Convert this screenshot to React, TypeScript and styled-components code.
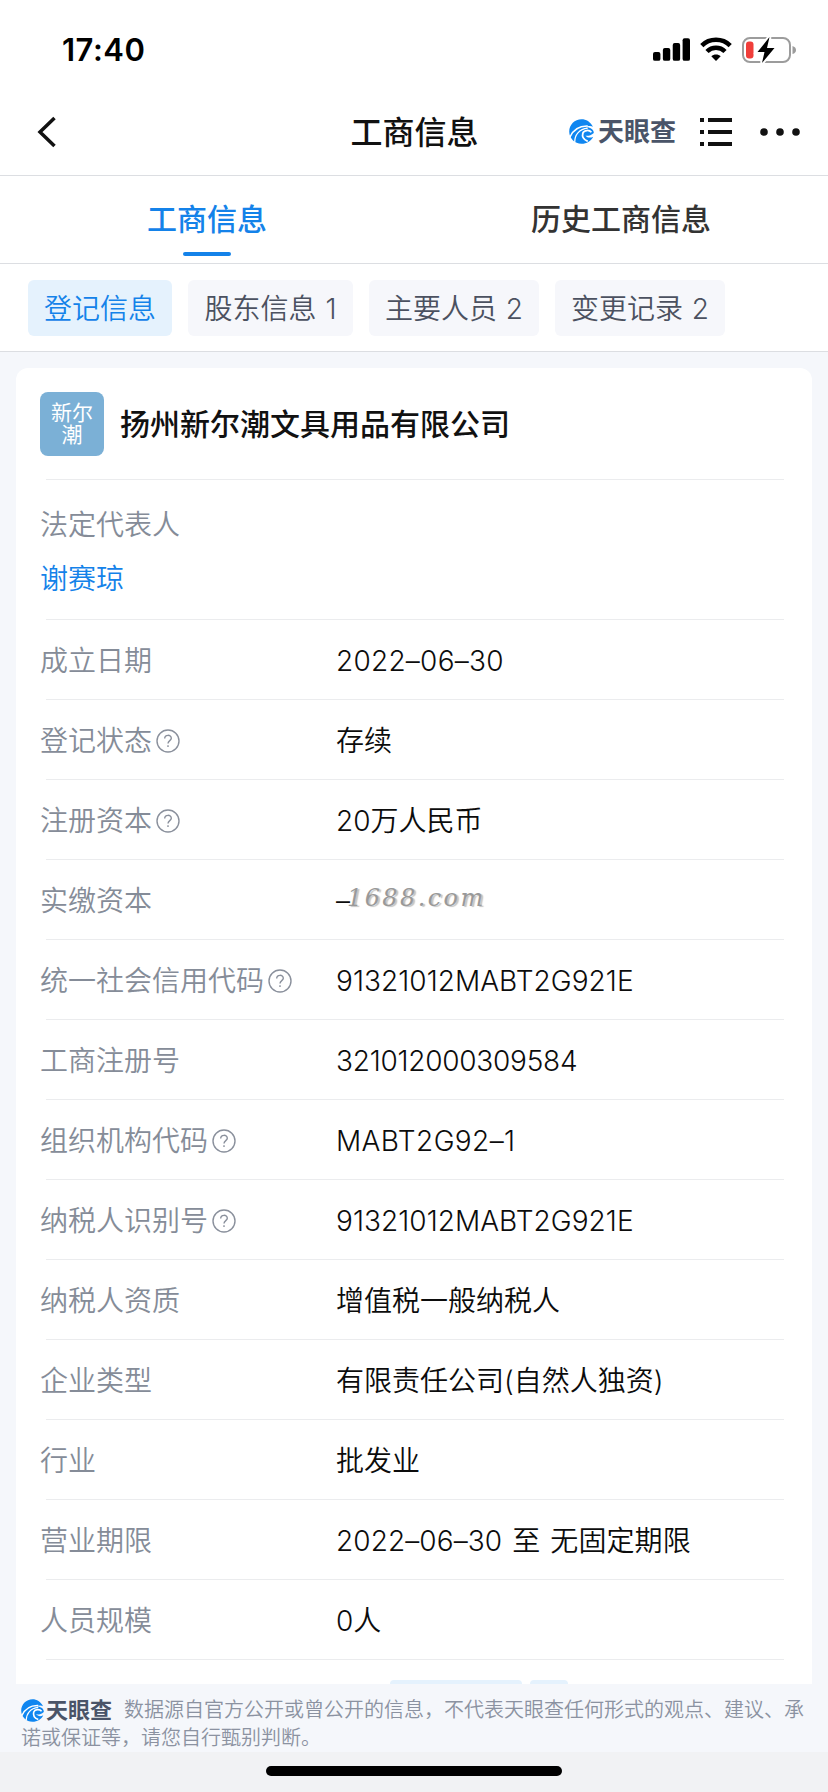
import styled, { createGlobalStyle } from 'styled-components';

const GlobalStyle = createGlobalStyle`
  * {
    box-sizing: border-box;
  }
  body {
    margin: 0;
    background: #fff;
    font-family: Inter, 'Noto Sans CJK SC', sans-serif;
    font-weight: 350;
  }
`;

const Screen = styled.div`
  width: 828px;
  height: 1792px;
  display: flex;
  flex-direction: column;
  overflow: hidden;
  background: #f5f7fb;
`;

const StatusBar = styled.div`
  height: 88px;
  flex: none;
  display: flex;
  align-items: center;
  justify-content: space-between;
  padding: 12px 32px 0 62px;
  background: #fff;
`;

const Clock = styled.span`
  font-size: 31px;
  font-weight: 600;
  line-height: 40px;
  letter-spacing: 0.5px;
  color: #000;
`;

const StatusIcons = styled.div`
  display: flex;
  align-items: center;
  gap: 10px;

  svg {
    display: block;
  }
`;

const NavBar = styled.header`
  height: 88px;
  flex: none;
  display: grid;
  grid-template-columns: 1fr auto 1fr;
  align-items: center;
  padding: 0 28px 0 37px;
  border-bottom: 1px solid #dcdee2;
  background: #fff;

  svg {
    display: block;
  }
`;

const NavTitle = styled.h1`
  margin: 2px 0 0 -8px;
  font-size: 32px;
  font-weight: 500;
  line-height: 44px;
  color: #111;
`;

const NavActions = styled.div`
  display: flex;
  align-items: center;
  justify-content: flex-end;
  gap: 28px;
`;

const BrandBox = styled.span<{ size: number }>`
  display: inline-flex;
  align-items: center;
  gap: 4px;
  margin-right: -4px;
  font-size: ${(props) => props.size}px;
  line-height: 28px;
  font-weight: 600;
  color: #4a5468;
  vertical-align: top;
`;

const Tabs = styled.nav`
  height: 88px;
  flex: none;
  display: grid;
  grid-template-columns: 1fr 1fr;
  border-bottom: 1px solid #dcdee2;
  background: #fff;
`;

const Tab = styled.div<{ $active?: boolean }>`
  display: flex;
  flex-direction: column;
  align-items: center;
  padding-top: 21px;
  font-size: 30px;
  font-weight: 500;
  line-height: 44px;
  color: ${(props) => (props.$active ? '#1482e9' : '#333')};

  &::after {
    content: '';
    width: 48px;
    height: 4px;
    margin-top: 11px;
    border-radius: 2px;
    background: ${(props) => (props.$active ? '#1482e9' : 'transparent')};
  }
`;

const Chips = styled.div`
  height: 88px;
  flex: none;
  display: flex;
  align-items: flex-start;
  gap: 16px;
  padding: 16px 28px 0;
  border-bottom: 1px solid #dcdee2;
  background: #fff;
`;

const Chip = styled.div<{ $active?: boolean; width: number }>`
  width: ${(props) => props.width}px;
  height: 56px;
  border-radius: 6px;
  font-size: 28px;
  line-height: 58px;
  text-align: center;
  white-space: nowrap;
  word-spacing: 1px;
  color: ${(props) => (props.$active ? '#1482e9' : '#4b5160')};
  background: ${(props) => (props.$active ? '#e5f2fd' : '#f6f7fb')};
`;

const Card = styled.main`
  flex: 1;
  min-height: 0;
  display: flex;
  flex-direction: column;
  margin: 16px 16px 0;
  padding: 0 28px 0 24px;
  border-radius: 12px 12px 0 0;
  background: #fff;
`;

const Company = styled.div`
  height: 111px;
  flex: none;
  display: flex;
  align-items: center;
  gap: 16px;
`;

const CompanyLogo = styled.div`
  width: 64px;
  height: 64px;
  padding-top: 10px;
  border-radius: 8px;
  font-size: 21px;
  font-weight: 400;
  line-height: 22px;
  text-align: center;
  color: #fff;
  background: #7bb0d6;
`;

const CompanyName = styled.h2`
  margin: 0;
  font-size: 30px;
  font-weight: 500;
  line-height: 44px;
  color: #111;
`;

const Divider = styled.div`
  height: 1px;
  flex: none;
  margin-left: 6px;
  background: #ebecee;
`;

const Person = styled.div`
  height: 139px;
  flex: none;
  padding-top: 23px;
  font-size: 28px;
  line-height: 44px;
  color: #858c98;
`;

const PersonLink = styled.div`
  margin-top: 10px;
  color: #1482e9;
`;

const Row = styled.div`
  height: 79px;
  flex: none;
  display: grid;
  grid-template-columns: 296px 1fr;
  align-items: center;
  padding-top: 2px;
  font-size: 28px;
  line-height: 44px;
`;

const Label = styled.span`
  display: flex;
  align-items: center;
  gap: 4px;
  color: #858c98;
`;

const Value = styled.span<{ $tracking?: number }>`
  position: relative;
  letter-spacing: ${(props) => props.$tracking ?? 0}px;
  word-spacing: 2px;
  color: #0c0c0c;
  white-space: nowrap;
`;

const Watermark = styled.span`
  position: absolute;
  left: 11px;
  top: -3px;
  font-family: 'DejaVu Serif', serif;
  font-size: 24px;
  font-style: italic;
  font-weight: 400;
  letter-spacing: 2.4px;
  color: #999;
  text-shadow: 2px 1px 1px #c4c4c4;
`;

const NextTags = styled.div`
  flex: 1;
  display: flex;
  align-items: flex-end;
  gap: 8px;
  padding-left: 350px;
`;

const NextTag = styled.div<{ width: number }>`
  width: ${(props) => props.width}px;
  height: 4px;
  border-radius: 4px 4px 0 0;
  background: #e5f2fd;
`;

const Footer = styled.footer`
  height: 68px;
  flex: none;
  padding: 12px 20px 0 21px;
  font-size: 20px;
  line-height: 28px;
  color: #8b92a1;

  ${BrandBox} {
    gap: 2px;
    margin-right: 12px;
    font-weight: 700;
  }
`;

const HomeArea = styled.div`
  height: 40px;
  flex: none;
  display: flex;
  justify-content: center;
  padding-top: 14px;
  background: #f1f2f4;
`;

const HomeIndicator = styled.div`
  width: 296px;
  height: 10px;
  border-radius: 5px;
  background: #000;
`;

function Brand({ size }: { size: number }) {
  return (
    <BrandBox size={size}>
      <svg width={size === 26 ? 25 : 23} height={size === 26 ? 25 : 23} viewBox="0 0 24 24">
        <path
          d="M23 7.500C20.500 2.500 16.500 .2 12 .2C5.500 .2 .2 5.500 .2 12C.2 18.500 5.500 23.800 12 23.800C17 23.800 21.500 21 23.200 17C20.500 18.500 17.500 18 15.800 16C18 16.500 21 16 23.800 13.500C24 10 20 7.500 16 8C18 6.500 21 6.300 23 7.500Z"
          fill="#0f86f0"
        />
        <path d="M.8 17.500C3.500 11.500 9 6.500 18 6.800" fill="none" stroke="#fff" strokeWidth="1.500" />
        <path d="M5.500 22C5.500 15.500 9.500 9.800 18 8.800" fill="none" stroke="#fff" strokeWidth="1.200" />
        <path d="M21.500 12.800C19.500 10.200 14.500 10.500 13.300 13.500C12.300 17 14.500 20 18 21.500" fill="none" stroke="#fff" strokeWidth="1.700" />
      </svg>
      天眼查
    </BrandBox>
  );
}

function HelpIcon() {
  return (
    <svg width="24" height="24" viewBox="0 0 24 24" fill="none" stroke="#8a909c" strokeWidth="1.4">
      <circle cx="12" cy="12" r="11" />
      <path d="M8.700 9.500C8.700 5.300 15.300 5.300 15.300 9.300C15.300 11.700 12 11.700 12 14.500" />
      <path d="M12 16.300V18" />
    </svg>
  );
}

const chips = [
  { text: '登记信息', width: 144 },
  { text: '股东信息 1', width: 165 },
  { text: '主要人员 2', width: 170 },
  { text: '变更记录 2', width: 170 },
];

const rows = [
  { label: '成立日期', value: '2022–06–30', tracking: 0.25 },
  { label: '登记状态', value: '存续', help: true },
  { label: '注册资本', value: '20万人民币', help: true },
  { label: '实缴资本', value: '–', watermark: '1688.com' },
  { label: '统一社会信用代码', value: '91321012MABT2G921E', help: true, tracking: 0.05 },
  { label: '工商注册号', value: '321012000309584', tracking: -0.25 },
  { label: '组织机构代码', value: 'MABT2G92–1', help: true, tracking: 0.4 },
  { label: '纳税人识别号', value: '91321012MABT2G921E', help: true, tracking: 0.05 },
  { label: '纳税人资质', value: '增值税一般纳税人' },
  { label: '企业类型', value: '有限责任公司(自然人独资)' },
  { label: '行业', value: '批发业' },
  { label: '营业期限', value: '2022–06–30 至 无固定期限', tracking: 0.1 },
  { label: '人员规模', value: '0人' },
];

export default function App() {
  return (
    <Screen>
      <GlobalStyle />
      <StatusBar>
        <Clock>17:40</Clock>
        <StatusIcons>
          <svg width="37" height="26" viewBox="0 0 37.5 26">
            <rect x="0" y="15" width="7.500" height="9" rx="2" />
            <rect x="10" y="11" width="7.500" height="13" rx="2" />
            <rect x="20" y="6" width="7.500" height="18" rx="2" />
            <rect x="30" y="1" width="7.500" height="23" rx="2" />
          </svg>
          <svg width="32" height="26" viewBox="0 0 32 26" fill="none" stroke="#000" strokeWidth="4.500">
            <path d="M1.800 8.600C9.500 .9 22.500 .9 30.200 8.600" />
            <path d="M7 14.500C12 9.500 20 9.500 25 14.500" />
            <path d="M16 24L11.300 19.200C13.700 16.800 18.300 16.800 20.700 19.200Z" fill="#000" stroke="none" />
          </svg>
          <svg width="54" height="26" viewBox="0 0 54 26">
            <rect x="1" y="1" width="47" height="24" rx="7" fill="none" stroke="#9c9c9c" strokeWidth="2" />
            <path d="M50.500 9Q54 10 54 13T50.500 17Z" fill="#9c9c9c" />
            <rect x="4" y="4.500" width="7.500" height="17" rx="3" fill="#f03e3a" />
            <path d="M27.500 0L15.500 15H22.500L20 26L32.500 11H25Z" stroke="#fff" strokeWidth="4" />
            <path d="M27.500 0L15.500 15H22.500L20 26L32.500 11H25Z" />
          </svg>
        </StatusIcons>
      </StatusBar>

      <NavBar>
        <svg width="20" height="32" viewBox="0 0 20 32" fill="none" stroke="#111" strokeWidth="3.500">
          <path d="M17.500 2L3 16L17.500 30" />
        </svg>
        <NavTitle>工商信息</NavTitle>
        <NavActions>
          <Brand size={26} />
          <svg width="32" height="28" viewBox="0 0 32 28" fill="#111">
            <path d="M0 0H4V4H0ZM8 0H32V4H8ZM0 12H4V16H0ZM8 12H32V16H8ZM0 24H4V28H0ZM8 24H32V28H8Z" />
          </svg>
          <svg width="40" height="8" viewBox="0 0 40 8" fill="#111">
            <circle cx="4" cy="4" r="3.800" />
            <circle cx="20" cy="4" r="3.800" />
            <circle cx="36" cy="4" r="3.800" />
          </svg>
        </NavActions>
      </NavBar>

      <Tabs>
        <Tab $active>工商信息</Tab>
        <Tab>历史工商信息</Tab>
      </Tabs>

      <Chips>
        {chips.map((chip, index) => (
          <Chip key={chip.text} $active={index === 0} width={chip.width}>
            {chip.text}
          </Chip>
        ))}
      </Chips>

      <Card>
        <Company>
          <CompanyLogo>
            新尔
            <br />潮
          </CompanyLogo>
          <CompanyName>扬州新尔潮文具用品有限公司</CompanyName>
        </Company>
        <Divider />
        <Person>
          法定代表人
          <PersonLink>谢赛琼</PersonLink>
        </Person>
        <Divider />
        {rows.map((row) => (
          <div key={row.label}>
            <Row>
              <Label>
                {row.label}
                {row.help && <HelpIcon />}
              </Label>
              <Value $tracking={row.tracking}>
                {row.value}
                {row.watermark && <Watermark>{row.watermark}</Watermark>}
              </Value>
            </Row>
            <Divider />
          </div>
        ))}
        <NextTags>
          <NextTag width={132} />
          <NextTag width={38} />
        </NextTags>
      </Card>

      <Footer>
        <Brand size={22} />
        数据源自官方公开或曾公开的信息，不代表天眼查任何形式的观点、建议、承诺或保证等，请您自行甄别判断。
      </Footer>
      <HomeArea>
        <HomeIndicator />
      </HomeArea>
    </Screen>
  );
}
